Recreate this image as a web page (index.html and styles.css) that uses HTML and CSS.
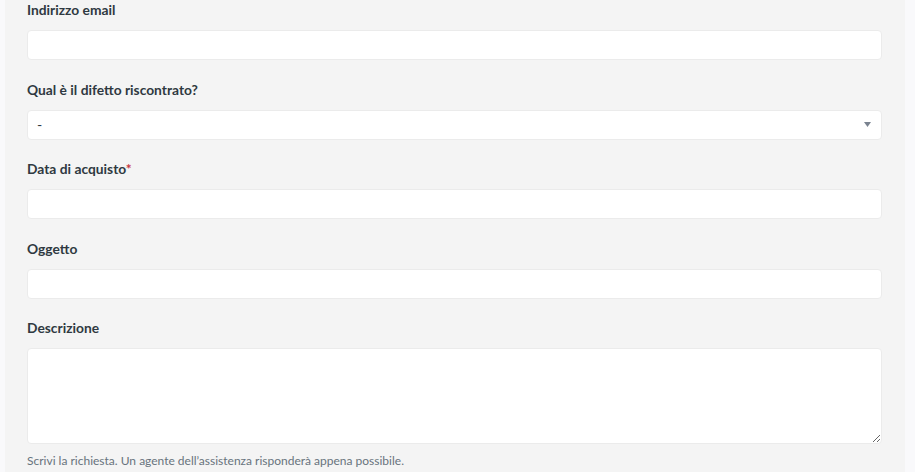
FILE: index.html
```html
<!DOCTYPE html>
<html lang="it">
<head>
    <meta charset="utf-8">
    <title>Invia una richiesta</title>
    <link rel="stylesheet" href="styles.css">
</head>
<body>
    <div class="panel">
        <form class="request-form">
            <div class="form-field">
                <label for="email">Indirizzo email</label>
                <input type="email" id="email">
            </div>

            <div class="form-field">
                <label for="difetto">Qual è il difetto riscontrato?</label>
                <div class="select">
                    <span class="select-value">-</span>
                    <svg class="select-arrow" width="7" height="5" viewBox="0 0 7 5"><path d="M0 0h7L3.5 5z" fill="#7a8390"/></svg>
                </div>
            </div>

            <div class="form-field">
                <label for="data">Data di acquisto<span class="required">*</span></label>
                <input type="text" id="data">
            </div>

            <div class="form-field">
                <label for="oggetto">Oggetto</label>
                <input type="text" id="oggetto">
            </div>

            <div class="form-field">
                <label for="descrizione">Descrizione</label>
                <textarea id="descrizione"></textarea>
                <p class="hint">Scrivi la richiesta. Un agente dell’assistenza risponderà appena possibile.</p>
            </div>
        </form>
    </div>
</body>
</html>
```

FILE: styles.css
```css
html, body {
    margin: 0;
    padding: 0;
    background-color: #f9f9fb;
    font-family: Lato, "Open Sans", sans-serif;
    color: #2f3941;
}

.panel {
    width: 900px;
    margin-left: 5px;
    min-height: 472px;
    background-color: #f4f4f4;
    padding: 0 23px 0 22px;
    box-sizing: border-box;
}

.form-field {
    margin-bottom: 19.5px;
}

.form-field label {
    display: block;
    font-size: 13.8px;
    font-weight: bold;
    line-height: 20px;
    margin-bottom: 10px;
}

.required {
    color: #c7383f;
}

.form-field input,
.select,
.form-field textarea {
    display: block;
    width: 100%;
    box-sizing: border-box;
    height: 30px;
    background-color: #fff;
    border: 1px solid #ebebeb;
    border-radius: 4px;
    font-family: inherit;
    font-size: 14px;
    outline: none;
}

.select {
    display: flex;
    align-items: center;
    justify-content: space-between;
    padding: 0 10px 0 9px;
}

.select-value {
    font-size: 14px;
    line-height: 20px;
}

.form-field textarea {
    height: 96px;
    resize: vertical;
}

.hint {
    margin: 8px 0 0 0;
    font-size: 12px;
    line-height: 18px;
    color: #68737d;
}
```
